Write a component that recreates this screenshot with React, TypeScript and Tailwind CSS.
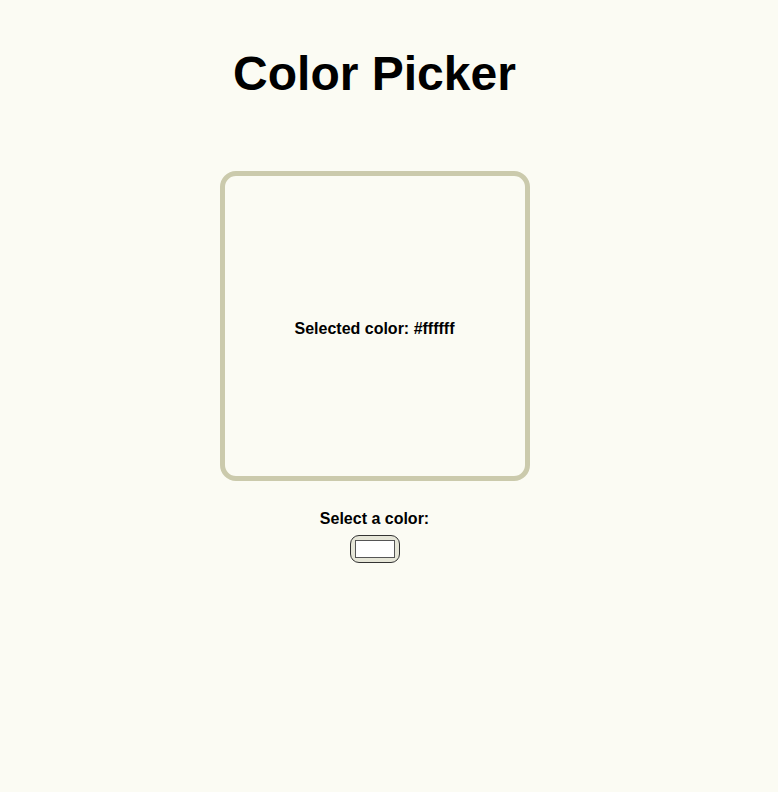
import React, { useState } from "react";

export default function App() {
  const [color, setColor] = useState("#ffffff");
  return (
    <div
      className="min-h-[792px] w-full bg-[#fbfbf3] text-black"
      style={{ fontFamily: '"Liberation Sans", Arial, sans-serif' }}
    >
      <div className="flex w-[749px] flex-col items-center pt-[47px]">
        <h1 className="text-[48px] font-bold leading-[54px]">Color Picker</h1>
        <div className="mt-[70px] flex h-[310px] w-[310px] items-center justify-center rounded-[16px] border-[5px] border-[#cbcaac] pt-[6px]">
          <p className="text-[16px] font-bold leading-[18px]">Selected color: {color}</p>
        </div>
        <label className="mt-[29px] text-[16px] font-bold leading-[18px]">Select a color:</label>
        <input
          type="color"
          value={color}
          onChange={(e) => setColor(e.target.value)}
          className="mt-[7px] h-[28px] w-[50px] cursor-pointer appearance-none rounded-[9px] border border-[#333] bg-[#e6e6d8] px-[4px] py-[4px] [&::-webkit-color-swatch-wrapper]:p-0 [&::-webkit-color-swatch]:rounded-none [&::-webkit-color-swatch]:border [&::-webkit-color-swatch]:border-solid [&::-webkit-color-swatch]:border-[#555]"
        />
      </div>
    </div>
  );
}
